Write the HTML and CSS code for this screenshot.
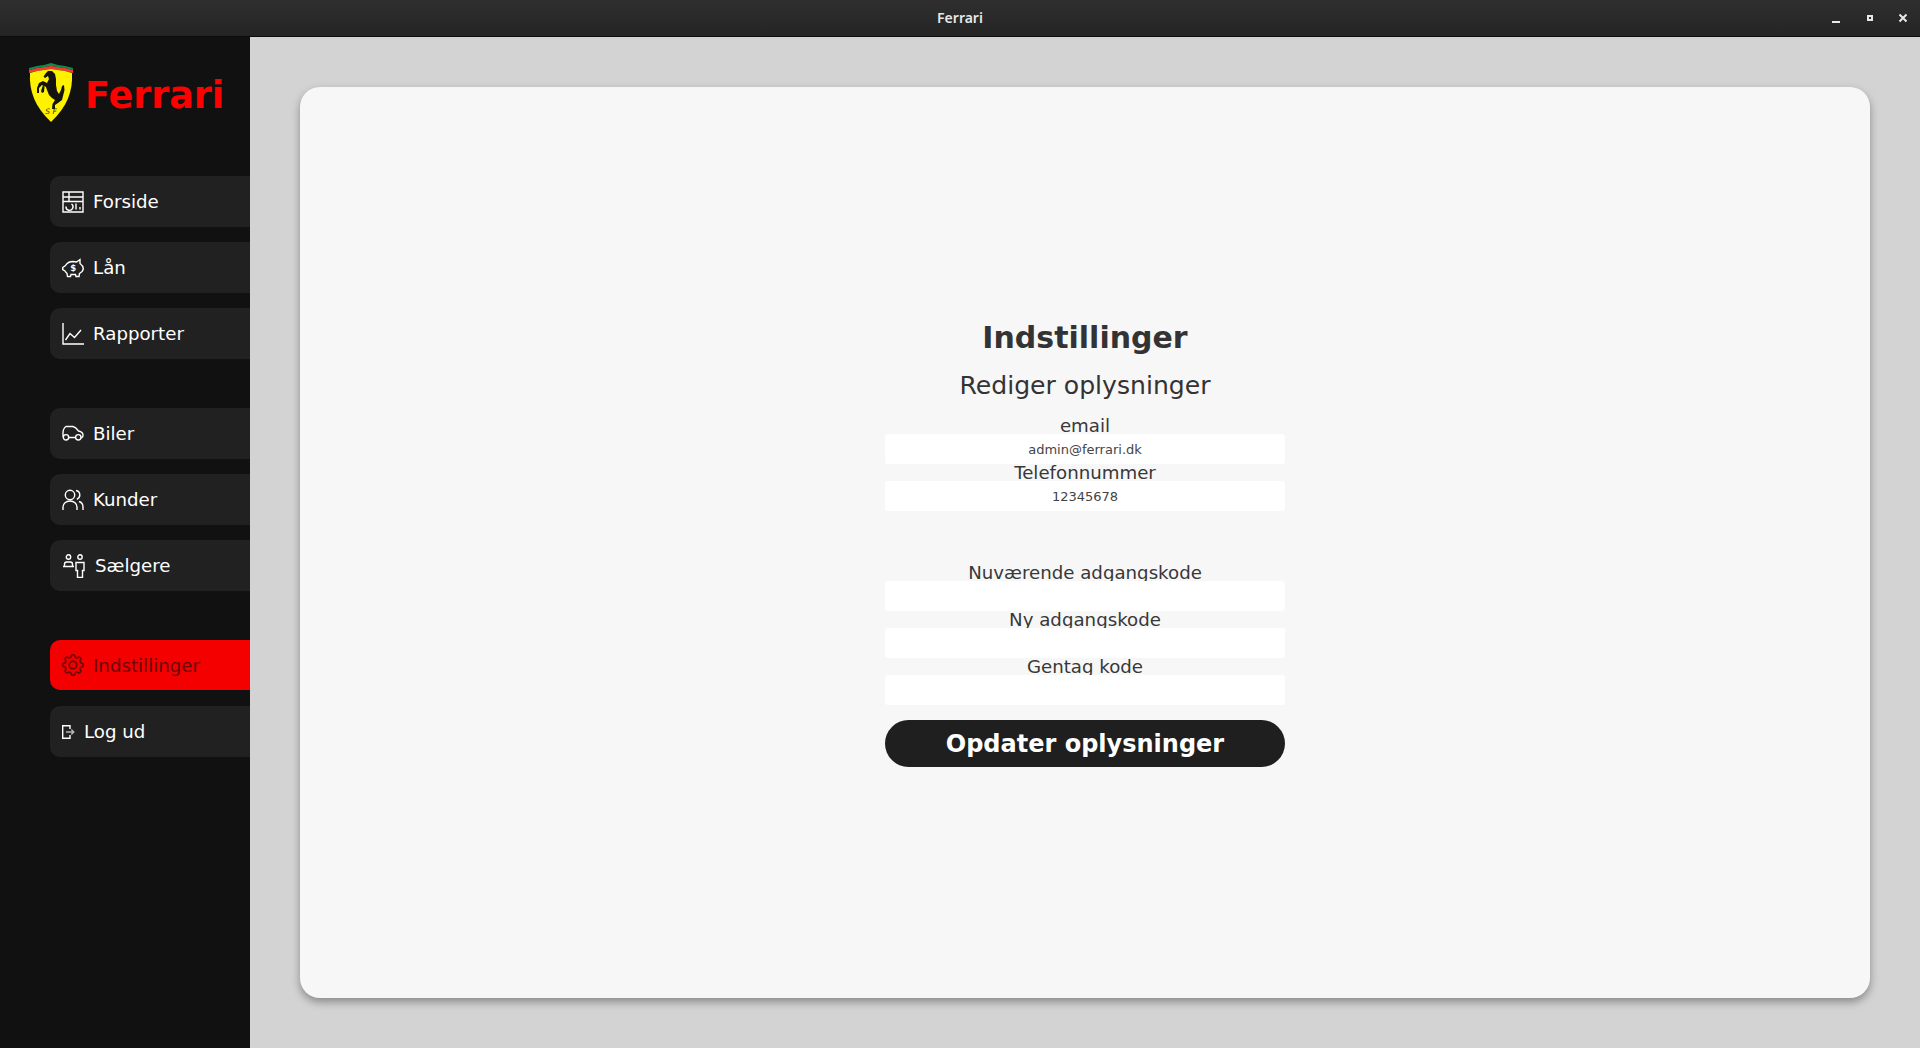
FILE: index.html
```html
<!DOCTYPE html>
<html lang="da">
<head>
<meta charset="utf-8">
<title>Ferrari</title>
<link rel="stylesheet" href="styles.css">
</head>
<body>
<header class="titlebar">
  <span class="title">Ferrari</span>
  <div class="win-controls">
    <svg class="win-icon" viewBox="0 0 16 16"><rect x="3" y="11" width="8" height="2" fill="#e8e8e8"/></svg>
    <svg class="win-icon" viewBox="0 0 16 16"><path d="M5 5h6v6H5z M7 7v2h2V7z" fill="#e8e8e8" fill-rule="evenodd"/></svg>
    <svg class="win-icon" viewBox="0 0 16 16"><path d="M4.500 4.500l7 7M11.500 4.500l-7 7" stroke="#e8e8e8" stroke-width="2" fill="none"/></svg>
  </div>
</header>
<div class="app">
  <aside class="sidebar">
    <div class="brand">
      <svg class="shield" viewBox="0 0 44 60">
        <path d="M0 5 L8 3 L15 2 L22 0 L29 2 L36 3 L44 5 L44 7 L36 5 L22 3 L8 5 L0 7Z" fill="#0a8f4c"/>
        <path d="M0 7 L8 5 L22 3 L36 5 L44 7 L44 10 L36 8 L22 6 L8 8 L0 10Z" fill="#ee3b33"/>
        <path d="M1 10 L8 8 L22 6 L36 8 L43 10 C44 28 38 44 22 59 C6 44 0 28 1 10Z" fill="#fff200"/>
        <path d="M19 8 L23 8 L26 11 L27 16 L27 22 L28 28 L30 31 L32 27 L33 23 L35 22 L35.500 27 L34 33 L33 37 L29 40 L26 42 L26 46 L23 46 L23.500 41 L26 37 L23 35 L20 32 L18 27 L17 24 L13 22 L10 25 L10 30 L8 30 L8 25 L10 20 L14 18 L18 20 L20 16 L19 13 L16 15 L14.500 13.500 L17 10 Z M14 22 L12 28 L13 30 L15 29 L15.500 24Z" fill="#15130f"/>
        <text class="shield-letters" x="22" y="51">S F</text>
      </svg>
      <span class="brand-name">Ferrari</span>
    </div>
    <nav class="nav">
      <div class="nav-group">
        <a class="nav-item">
          <svg class="ico" viewBox="0 0 22 22"><path d="M1 1h20v20H1z M1 6h20 M1 10.500h20 M7 1v9.500 M9.500 13a3.500 3.500 0 1 1-5.500 2.500 M14 12.500v6 M18 16v2.500"/></svg>
          <span>Forside</span>
        </a>
        <a class="nav-item">
          <svg class="ico" viewBox="0 0 22 22"><path d="M.7 10.500L3.500 8.500C5 6 8 4.500 11 4.500L14.500 5L18 2.500V6.500C20 8 21.300 10 21.300 11.500C21.300 13.500 20 15 17.500 16.500L17 19.500H14L13.500 17.500H9L8.500 19.500H5.500L5 16.500C4 15.500 3.500 15 3 14L.7 12.500Z"/><text class="dollar" x="11.300" y="14">$</text></svg>
          <span>Lån</span>
        </a>
        <a class="nav-item">
          <svg class="ico" viewBox="0 0 22 22"><path d="M1 0v21h21 M3.500 17L8 10.500l4.500 4L19 7"/></svg>
          <span>Rapporter</span>
        </a>
      </div>
      <div class="nav-group">
        <a class="nav-item">
          <svg class="ico" viewBox="0 0 22 22"><path d="M1.300 14C.8 13 1 12 1 10C1 7 2.500 4.500 4 3.500H11C13 4 15 6 16.500 8C19 8.500 21 10 21 12C21 13.500 21 14 20 14.500H19 M6.700 14.500H13.600"/><circle cx="4" cy="14.300" r="2.700"/><circle cx="16.300" cy="14.300" r="2.700"/></svg>
          <span>Biler</span>
        </a>
        <a class="nav-item">
          <svg class="ico" viewBox="0 0 22 22"><circle cx="8" cy="6" r="4.700"/><path d="M1 21v-3c0-3.500 3-6 7-6s7 2.500 7 6v3 M14 1.500c3 .5 3.800 2.500 3.800 4.500s-1 3.500-3 4.300 M17 12.500c2.500.7 4 2.700 4 5.500v3"/></svg>
          <span>Kunder</span>
        </a>
        <a class="nav-item">
          <svg class="ico ico-wide" viewBox="0 0 24 24"><circle cx="6.500" cy="3" r="2.200"/><circle cx="18" cy="3" r="2.200"/><path d="M1 12.500h11 M2.500 12.500v-2c0-1.500 1-2.500 2-2.500h4c1 0 2 1 2 2.500v2 M14 8.500h8v8h-1.500v7h-5v-7H14z"/></svg>
          <span>Sælgere</span>
        </a>
      </div>
      <div class="nav-group">
        <a class="nav-item active">
          <svg class="ico ico-gear" viewBox="0 0 16 16"><path fill-rule="evenodd" d="M8 4.754a3.246 3.246 0 1 0 0 6.492 3.246 3.246 0 0 0 0-6.492zM5.754 8a2.246 2.246 0 1 1 4.492 0 2.246 2.246 0 0 1-4.492 0z"/><path fill-rule="evenodd" d="M9.796 1.343c-.527-1.790-3.065-1.790-3.592 0l-.094.319a.873.873 0 0 1-1.255.52l-.292-.16c-1.640-.892-3.433.902-2.540 2.541l.159.292a.873.873 0 0 1-.52 1.255l-.319.094c-1.790.527-1.790 3.065 0 3.592l.319.094a.873.873 0 0 1 .52 1.255l-.16.292c-.892 1.640.901 3.434 2.541 2.540l.292-.159a.873.873 0 0 1 1.255.52l.094.319c.527 1.790 3.065 1.790 3.592 0l.094-.319a.873.873 0 0 1 1.255-.52l.292.16c1.640.893 3.434-.902 2.540-2.541l-.159-.292a.873.873 0 0 1 .52-1.255l.319-.094c1.790-.527 1.790-3.065 0-3.592l-.319-.094a.873.873 0 0 1-.52-1.255l.16-.292c.893-1.640-.902-3.433-2.541-2.540l-.292.159a.873.873 0 0 1-1.255-.52l-.094-.319zm-2.633.283c.246-.835 1.428-.835 1.674 0l.094.319a1.873 1.873 0 0 0 2.693 1.115l.291-.16c.764-.415 1.600.42 1.184 1.185l-.159.292a1.873 1.873 0 0 0 1.116 2.692l.318.094c.835.246.835 1.428 0 1.674l-.319.094a1.873 1.873 0 0 0-1.115 2.693l.16.291c.415.764-.42 1.600-1.185 1.184l-.291-.159a1.873 1.873 0 0 0-2.693 1.116l-.094.318c-.246.835-1.428.835-1.674 0l-.094-.319a1.873 1.873 0 0 0-2.692-1.115l-.292.16c-.764.415-1.600-.42-1.184-1.185l.159-.291A1.873 1.873 0 0 0 1.945 8.930l-.319-.094c-.835-.246-.835-1.428 0-1.674l.319-.094A1.873 1.873 0 0 0 3.060 4.377l-.16-.292c-.415-.764.42-1.600 1.185-1.184l.292.159a1.873 1.873 0 0 0 2.692-1.115l.094-.319z"/></svg>
          <span>Indstillinger</span>
        </a>
        <a class="nav-item">
          <svg class="ico ico-small" viewBox="0 0 13 14"><path d="M8 4V.7H.7v12.600H8V10"/><path d="M4 7h8M9.300 4.500L11.800 7l-2.500 2.500" stroke="#b5b5b5"/></svg>
          <span>Log ud</span>
        </a>
      </div>
    </nav>
  </aside>
  <main class="content">
    <section class="card">
      <form class="form">
        <h1 class="heading">Indstillinger</h1>
        <h2 class="subheading">Rediger oplysninger</h2>
        <label class="field-label">email</label>
        <input class="field" type="text" value="admin@ferrari.dk">
        <label class="field-label">Telefonnummer</label>
        <input class="field" type="text" value="12345678">
        <div class="spacer"></div>
        <label class="field-label">Nuværende adgangskode</label>
        <input class="field" type="password">
        <label class="field-label">Ny adgangskode</label>
        <input class="field" type="password">
        <label class="field-label">Gentag kode</label>
        <input class="field" type="password">
        <button class="submit" type="button">Opdater oplysninger</button>
      </form>
    </section>
  </main>
</div>
</body>
</html>
```
FILE: styles.css
```css
* { box-sizing: border-box; }
html, body { margin: 0; height: 100%; }
body {
  display: flex;
  flex-direction: column;
  height: 1048px;
  overflow: hidden;
  font-family: "DejaVu Sans", sans-serif;
  background: #d3d3d3;
}
.titlebar {
  position: relative;
  flex: none;
  height: 37px;
  padding-bottom: 2px;
  display: flex;
  align-items: center;
  justify-content: center;
  background: linear-gradient(#2f2f2f, #242424);
  border-bottom: 1px solid #0c0c0c;
  color: #e8e8e8;
}
.title {
  font-family: "Noto Sans", sans-serif;
  font-size: 14px;
  font-weight: 600;
}
.win-controls {
  position: absolute;
  right: 9px;
  top: 10px;
  display: flex;
  gap: 17px;
}
.win-icon { width: 16px; height: 16px; display: block; }
.app { flex: 1; display: flex; min-height: 0; }
.sidebar {
  flex: none;
  width: 250px;
  background: #111;
  padding-top: 26px;
}
.brand {
  display: flex;
  align-items: center;
  height: 60px;
  padding-left: 29px;
  gap: 12px;
}
.shield { width: 44px; height: 60px; display: block; }
.shield-letters {
  font-family: "DejaVu Sans", sans-serif;
  font-size: 7.500px;
  font-style: italic;
  text-anchor: middle;
  fill: #3a3410;
}
.brand-name {
  padding-top: 5px;
  color: #f00;
  font-size: 36.500px;
  font-weight: 700;
}
.nav { padding: 53px 0 0 50px; display: flex; flex-direction: column; gap: 49px; }
.nav-group { display: flex; flex-direction: column; gap: 15px; }
.nav-item {
  height: 51px;
  display: flex;
  align-items: center;
  gap: 9px;
  padding-left: 12px;
  background: #212121;
  border-radius: 10px 0 0 10px;
  color: #fff;
  font-size: 18.200px;
}
.ico {
  flex: none;
  width: 22px;
  height: 22px;
  fill: none;
  stroke: #fff;
  stroke-width: 1.400;
}
.dollar {
  font-family: "DejaVu Sans", sans-serif;
  font-size: 8.500px;
  font-weight: 700;
  text-anchor: middle;
  fill: #fff;
  stroke: none;
}
.ico-wide { width: 24px; height: 24px; }
.ico-small { width: 13px; height: 14px; }
.active { height: 50px; margin-bottom: 1px; background: #f50000; color: #6a0808; }
.ico-gear { stroke: #6a0808; stroke-width: .2; fill: #6a0808; }
.content { flex: 1; padding: 50px; min-width: 0; }
.card {
  height: 911px;
  display: flex;
  justify-content: center;
  background: #f7f7f7;
  border-radius: 20px;
  box-shadow: 0 4px 8px rgba(0, 0, 0, .35);
}
.form {
  width: 400px;
  padding-top: 230px;
  display: flex;
  flex-direction: column;
  align-items: stretch;
  text-align: center;
  color: #333;
}
.heading {
  margin: 0;
  height: 42px;
  line-height: 42px;
  font-size: 30px;
  font-weight: 700;
}
.subheading {
  margin: 7px 0 0;
  height: 40px;
  line-height: 40px;
  font-size: 25.100px;
  font-weight: 400;
}
.field-label {
  height: 17px;
  line-height: 18px;
  font-size: 18.200px;
  color: #383838;
}
.subheading + .field-label { margin-top: 11px; }
.field {
  position: relative;
  display: block;
  width: 100%;
  height: 30px;
  border: 0;
  outline: 0;
  padding: 0;
  border-radius: 3px;
  background: #fff;
  text-align: center;
  font-family: "DejaVu Sans", sans-serif;
  font-size: 13px;
  color: #444;
}
.spacer { height: 53px; }
.submit {
  margin-top: 15px;
  height: 47px;
  border: 0;
  border-radius: 24px;
  background: #1f1f1f;
  color: #fff;
  font-family: "DejaVu Sans", sans-serif;
  font-size: 24px;
  font-weight: 700;
}
```
